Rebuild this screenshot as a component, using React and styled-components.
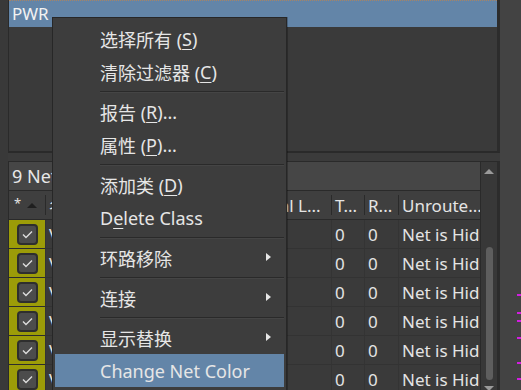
import React from "react";
import styled, { createGlobalStyle } from "styled-components";

const GlobalStyle = createGlobalStyle`
  html, body {
    margin: 0;
    padding: 0;
    background: #3b3b3b;
  }
  body {
    font-family: "Noto Sans", "Noto Sans CJK SC", sans-serif;
    color: #e6e6e6;
  }
`;

const Screen = styled.div`
  position: relative;
  display: flex;
  width: 521px;
  height: 390px;
  overflow: hidden;
  background: #3b3b3b;
`;

const Gutter = styled.div`
  width: 8px;
  flex: none;
  background: #393939;
`;

const Workspace = styled.div`
  width: 492px;
  flex: none;
  display: flex;
  flex-direction: column;
`;

const ListPanel = styled.div`
  height: 151px;
  flex: none;
  background: #3a3a3a;
  border-left: 1px solid #2a2a2a;
  border-right: 3px solid #2c2c2c;
  border-bottom: 2px solid #2a2a2a;
`;

const SelectedRow = styled.div`
  height: 26px;
  padding-left: 3px;
  background: #6385a8;
  border-top: 1px dotted #a98463;
  font-size: 17px;
  line-height: 26px;
  color: #f2f2f2;
`;

const Spacer = styled.div`
  height: 8px;
  flex: none;
`;

const NetPanel = styled.div`
  flex: 1;
  display: flex;
  border-left: 1px solid #2a2a2a;
  border-top: 1px solid #2a2a2a;
  border-right: 3px solid #2c2c2c;
`;

const Table = styled.div`
  width: 471px;
  flex: none;
  display: flex;
  flex-direction: column;
`;

const GroupBar = styled.div`
  height: 28px;
  padding-left: 3px;
  background: #464646;
  border-bottom: 1px solid #2a2a2a;
  font-size: 18px;
  line-height: 28px;
  color: #e8e8e8;
  white-space: nowrap;
`;

const columns = "36px 201px 85px 33px 34px 82px";

const HeaderRow = styled.div`
  display: grid;
  grid-template-columns: ${columns};
  height: 28px;
  background: #3f3f3f;
  border-bottom: 1px solid #2a2a2a;
`;

const HeadCell = styled.div`
  display: flex;
  align-items: center;
  gap: 6px;
  padding-left: ${({ pad }) => pad || 3}px;
  font-size: 17px;
  color: #e4e4e4;
  white-space: nowrap;
  overflow: hidden;
  border-left: ${({ first }) => (first ? "none" : "1px solid #2a2a2a")};
  height: 20px;
  align-self: center;
`;

const Star = styled.span`
  font-size: 13px;
  margin-top: -4px;
`;

const SortArrow = styled.span`
  width: 0;
  height: 0;
  border-left: 5px solid transparent;
  border-right: 5px solid transparent;
  border-bottom: 5px solid #1f1f1f;
`;

const Row = styled.div`
  display: grid;
  grid-template-columns: ${columns};
  height: 28px;
  border-bottom: 1px solid #333333;
  background: #3a3a3a;
`;

const Cell = styled.div`
  display: flex;
  align-items: center;
  padding-left: 3px;
  font-size: 17px;
  color: #e4e4e4;
  white-space: nowrap;
  overflow: hidden;
  border-left: 1px solid #343434;
`;

const CheckCell = styled.div`
  display: flex;
  align-items: center;
  justify-content: center;
  background: #9c9c08;
  border-bottom: 1px solid #2c2c2c;
  margin-bottom: -1px;
`;

const CheckBox = styled.div`
  width: 17px;
  height: 17px;
  border: 2px solid #2e2e2e;
  border-radius: 4px;
  background: #4c4c4c;
  display: flex;
  align-items: center;
  justify-content: center;
`;

const Scrollbar = styled.div`
  width: 16px;
  flex: none;
  border-left: 1px solid #2a2a2a;
  background: #383838;
  display: flex;
  flex-direction: column;
  align-items: center;
`;

const UpArrow = styled.div`
  margin-top: 7px;
  width: 0;
  height: 0;
  border-left: 5px solid transparent;
  border-right: 5px solid transparent;
  border-bottom: 5px solid #9a9a9a;
`;

const Thumb = styled.div`
  margin-top: 73px;
  width: 7px;
  height: 133px;
  border-radius: 4px;
  background: #5e5e5e;
`;

const DownArrow = styled.div`
  margin-top: 6px;
  width: 0;
  height: 0;
  border-left: 5px solid transparent;
  border-right: 5px solid transparent;
  border-top: 5px solid #9a9a9a;
`;

const SidePanel = styled.div`
  position: relative;
  flex: 1;
  background: #434343;
`;

const Mark = styled.div`
  position: absolute;
  right: 0;
  width: 4px;
  height: 2px;
  background: #d21ee0;
`;

const Menu = styled.div`
  position: absolute;
  left: 52px;
  top: 17px;
  width: 235px;
  padding: 4px 2px 0 2px;
  box-sizing: border-box;
  height: 380px;
  background: #3d3d3d;
  border: 1px solid #272727;
  box-shadow: 1px 0 0 rgba(0, 0, 0, 0.25);
`;

const MenuItem = styled.div`
  position: relative;
  height: 33px;
  padding-left: 45px;
  display: flex;
  align-items: center;
  font-size: 18px;
  color: #e6e6e6;
  white-space: nowrap;
  background: ${({ active }) => (active ? "#6385a8" : "transparent")};

  u {
    text-decoration: underline;
    text-decoration-thickness: 1px;
    text-underline-offset: 3px;
  }
`;

const SubArrow = styled.span`
  position: absolute;
  right: 13px;
  top: 12px;
  width: 0;
  height: 0;
  border-top: 4px solid transparent;
  border-bottom: 4px solid transparent;
  border-left: 5px solid #e6e6e6;
`;

const Separator = styled.div`
  height: 7px;
  margin-left: 45px;
  display: flex;
  align-items: center;

  &::before {
    content: "";
    flex: 1;
    height: 1px;
    background: #2a2a2a;
    box-shadow: 0 1px 0 #454545;
  }
`;

const CheckIcon = () => (
  <svg width="11" height="9" viewBox="0 0 11 9">
    <path d="M1 4.5 L4 7.5 L10 1.5" fill="none" stroke="#dcdcdc" strokeWidth="1.4" />
  </svg>
);

const nets = ["VCC_3V3", "VCC_5V", "VCC_1V8", "VDD_CORE", "VBAT", "VIN"];

const menuItems = [
  { label: <>选择所有 (<u>S</u>)</> },
  { label: <>清除过滤器 (<u>C</u>)</> },
  { sep: true },
  { label: <>报告 (<u>R</u>)...</> },
  { label: <>属性 (<u>P</u>)...</> },
  { sep: true },
  { label: <>添加类 (<u>D</u>)</> },
  { label: <>D<u>e</u>lete Class</> },
  { sep: true },
  { label: "环路移除", sub: true },
  { sep: true },
  { label: "连接", sub: true },
  { sep: true },
  { label: "显示替换", sub: true },
  { label: "Change Net Color", active: true },
];

const marks = [294, 312, 320, 337, 362, 378];

export default function App() {
  return (
    <>
      <GlobalStyle />
      <Screen>
        <Gutter />
        <Workspace>
          <ListPanel>
            <SelectedRow>PWR</SelectedRow>
          </ListPanel>
          <Spacer />
          <NetPanel>
            <Table>
              <GroupBar>9 Nets</GroupBar>
              <HeaderRow>
                <HeadCell first pad={5}>
                  <Star>*</Star>
                  <SortArrow />
                </HeadCell>
                <HeadCell>名称</HeadCell>
                <HeadCell pad={8}>Total L...</HeadCell>
                <HeadCell>T...</HeadCell>
                <HeadCell>R...</HeadCell>
                <HeadCell>Unroute...</HeadCell>
              </HeaderRow>
              {nets.map((n) => (
                <Row key={n}>
                  <CheckCell>
                    <CheckBox>
                      <CheckIcon />
                    </CheckBox>
                  </CheckCell>
                  <Cell>{n}</Cell>
                  <Cell />
                  <Cell>0</Cell>
                  <Cell>0</Cell>
                  <Cell>Net is Hidden</Cell>
                </Row>
              ))}
            </Table>
            <Scrollbar>
              <UpArrow />
              <Thumb />
              <DownArrow />
            </Scrollbar>
          </NetPanel>
        </Workspace>
        <SidePanel>
          {marks.map((y) => (
            <Mark key={y} style={{ top: y }} />
          ))}
        </SidePanel>
        <Menu>
          {menuItems.map((m, i) =>
            m.sep ? (
              <Separator key={i} />
            ) : (
              <MenuItem key={i} active={m.active}>
                {m.label}
                {m.sub && <SubArrow />}
              </MenuItem>
            )
          )}
        </Menu>
      </Screen>
    </>
  );
}
